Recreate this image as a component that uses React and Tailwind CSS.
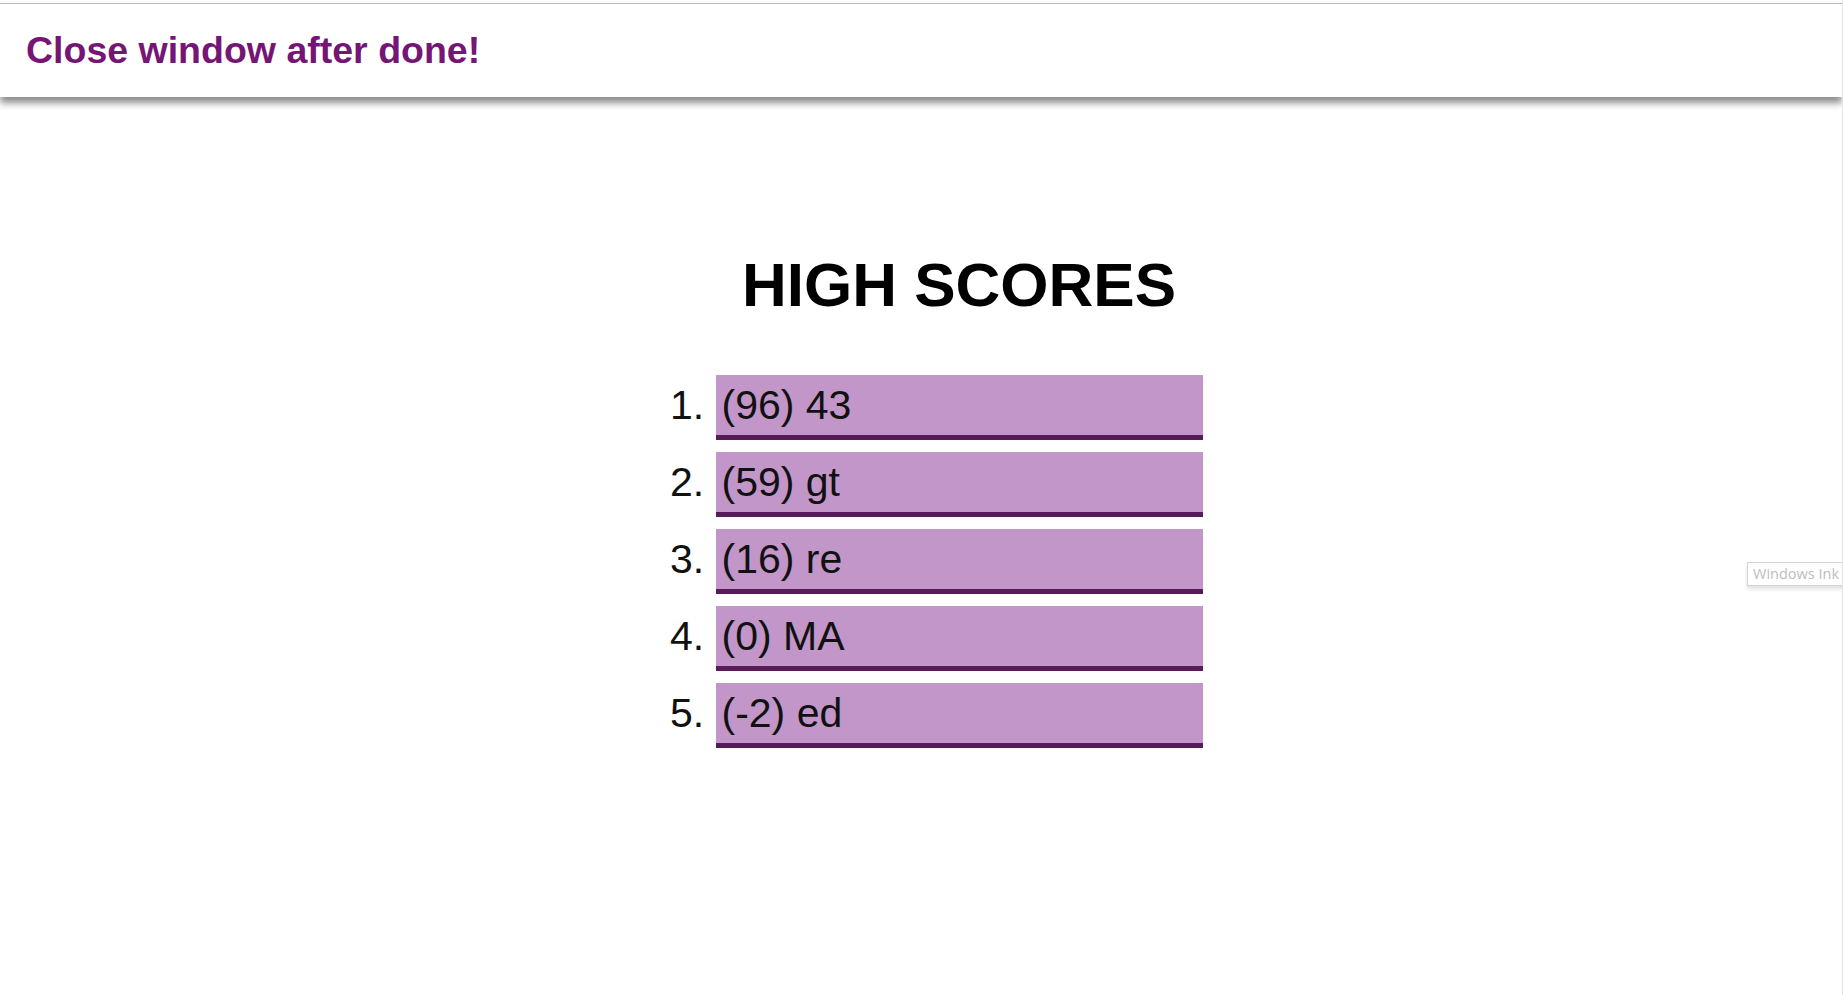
import React from "react";

const scores = ["(96) 43", "(59) gt", "(16) re", "(0) MA", "(-2) ed"];

export default function App() {
  return (
    <div
      className="relative min-h-screen bg-white border-r border-[#e4e4e4] overflow-hidden"
      style={{ fontFamily: '"Liberation Sans", Arial, sans-serif' }}
    >
      <div className="pt-[3px]">
        <header className="h-[94px] border-t border-[#bcbcbc] bg-white flex items-center pl-[26px] shadow-[0_6px_7px_rgba(0,0,0,0.45)]">
          <h1 className="text-[37.5px] font-bold text-[#751575]">Close window after done!</h1>
        </header>
      </div>

      <main className="flex flex-col items-center pl-[76px] pt-[157px]">
        <h2 className="text-[62px] leading-none font-bold text-black">HIGH SCORES</h2>
        <ol className="list-decimal w-[487px] mt-[59px] flex flex-col gap-[12px] text-[41px] text-[#111]">
          {scores.map((s) => (
            <li
              key={s}
              className="h-[65px] leading-[60px] pl-[6px] bg-[#c296c8] border-b-[5px] border-[#581b59]"
            >
              {s}
            </li>
          ))}
        </ol>
      </main>

      <div
        className="absolute left-[1747px] top-[562px] w-[100px] h-[24px] border border-[#d4d4d4] bg-white shadow-[0_3px_4px_rgba(0,0,0,0.12)] pl-[5px] text-[14.5px] leading-[21px] text-[#bdbdbd] whitespace-nowrap overflow-hidden"
        style={{ fontFamily: '"Open Sans", "Noto Sans", sans-serif' }}
      >
        Windows Ink Workspace
      </div>
    </div>
  );
}
